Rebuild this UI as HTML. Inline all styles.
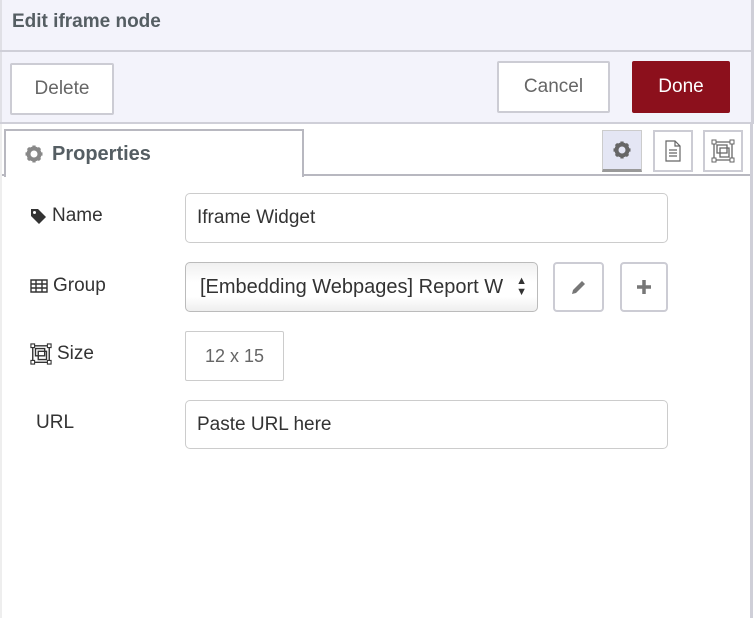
<!DOCTYPE html>
<html><head><style>
body{margin:0;width:754px;height:618px;background:#fff;font-family:"Liberation Sans",sans-serif;position:relative;overflow:hidden;color:#333}
.a{position:absolute;box-sizing:border-box}
.btn{border:2px solid #ccccd4;background:#fff;color:#666;font-size:19px;display:flex;align-items:center;justify-content:center;border-radius:2px}
.inp{border:1px solid #ccc;border-radius:5px;background:#fff;font-size:19px;color:#333;padding-left:11px;display:flex;align-items:center}
.lbl{font-size:19px;color:#333;display:flex;align-items:center;gap:5px}
</style></head><body>
<div class="a" style="left:0;top:0;width:754px;height:123px;background:#f3f3fb;border-left:2px solid #e0e0e6;border-right:3px solid #cfcfd8"></div>
<div class="a" style="left:12px;top:11px;font-size:19px;font-weight:bold;color:#555e63">Edit iframe node</div>
<div class="a" style="left:0;top:50px;width:754px;height:2px;background:#cfcfd8"></div>
<div class="a" style="left:0;top:122px;width:754px;height:2px;background:#cfcfd8"></div>
<div class="a btn" style="left:10px;top:63px;width:104px;height:52px">Delete</div>
<div class="a btn" style="left:497px;top:61px;width:113px;height:52px">Cancel</div>
<div class="a btn" style="left:632px;top:61px;width:98px;height:52px;background:#8c101c;border-color:#8c101c;color:#fff">Done</div>
<div class="a" style="left:750px;top:124px;width:3px;height:494px;background:#cfcfd8"></div>
<div class="a" style="left:0;top:124px;width:2px;height:494px;background:#eee"></div>
<div class="a" style="left:2px;top:174px;width:748px;height:2px;background:#b8b8c0"></div>
<svg width="0" height="0" style="position:absolute"><defs><g id="gear"><circle cx="9" cy="9" r="5.5" fill="none" stroke-width="4"/><g stroke-width="3.2" stroke-linecap="butt"><path d="M9 0.5v3.5M9 14v3.5M0.5 9h3.5M14 9h3.5M3 3l2.5 2.5M12.5 12.5L15 15M3 15l2.5-2.5M12.5 5.5L15 3"/></g></g></defs></svg>
<div class="a" style="left:4px;top:129px;width:300px;height:48px;background:#fff;border:2px solid #b8b8c0;border-bottom:none;display:flex;align-items:center;padding-left:19px;font-size:20px;font-weight:bold;color:#555e63;gap:9px">
<svg width="18" height="18" viewBox="0 0 18 18" stroke="#888"><use href="#gear"/></svg>Properties</div>
<div class="a" style="left:602px;top:130px;width:40px;height:42px;background:#e4e6f4;border:1px solid #ccc;border-bottom:3px solid #999;display:flex;align-items:center;justify-content:center">
<svg width="18" height="18" viewBox="0 0 18 18" stroke="#666"><use href="#gear"/></svg></div>
<div class="a" style="left:653px;top:130px;width:40px;height:42px;background:#fff;border:2px solid #ccccd4;display:flex;align-items:center;justify-content:center">
<svg width="16" height="22" viewBox="0 0 16 22"><path d="M1 1h9l5 5v15H1z M10 1v5h5 M4 10h8M4 13h8M4 16h8" fill="none" stroke="#666" stroke-width="1.2"/></svg></div>
<div class="a" style="left:703px;top:130px;width:40px;height:42px;background:#fff;border:2px solid #ccccd4;display:flex;align-items:center;justify-content:center">
<svg width="24" height="24" viewBox="0 0 24 24"><path d="M3 3h18v18H3z M6 6h10v8H6z M9 9h9v9H9z" fill="none" stroke="#666" stroke-width="1.3"/><path d="M1 1h4v4H1zM19 1h4v4h-4zM1 19h4v4H1zM19 19h4v4h-4z" fill="#fff" stroke="#666" stroke-width="1"/></svg></div>

<div class="a lbl" style="left:30px;top:204px;height:24px"><svg width="17" height="17" viewBox="0 0 17 17"><path d="M1 1h7l8 8-7 7-8-8z" fill="#333"/><circle cx="4.5" cy="4.5" r="1.5" fill="#fff"/></svg>Name</div>
<div class="a inp" style="left:185px;top:193px;width:483px;height:50px">Iframe Widget</div>

<div class="a lbl" style="left:30px;top:274px;height:24px"><svg width="18" height="14" viewBox="0 0 18 14"><path d="M1 1h16v12H1z M1 5h16M1 9h16M6 1v12M12 1v12" fill="none" stroke="#333" stroke-width="1.4"/></svg>Group</div>
<div class="a inp" style="left:185px;top:262px;width:353px;height:50px;background:linear-gradient(#f0f0f0,#fff 40%,#fff 70%,#eee);border-color:#bbb;white-space:nowrap;overflow:hidden;padding-left:14px;font-size:20px"><span style="display:inline-block;width:304px;overflow:hidden">[Embedding Webpages] Report Widget</span><span style="position:absolute;right:10px;top:13px;font-size:11px;line-height:11px;text-align:center;color:#333">▲<br>▼</span></div>
<div class="a btn" style="left:553px;top:262px;width:51px;height:50px;border-radius:4px">
<svg width="16" height="16" viewBox="0 0 16 16"><path d="M1 15l1-4 9-9 3 3-9 9z" fill="#777"/></svg></div>
<div class="a btn" style="left:620px;top:262px;width:48px;height:50px;border-radius:4px">
<svg width="14" height="14" viewBox="0 0 14 14"><path d="M7 0v14M0 7h14" stroke="#777" stroke-width="3.5"/></svg></div>

<div class="a lbl" style="left:30px;top:342px;height:24px"><svg width="22" height="22" viewBox="0 0 24 24"><path d="M3 3h18v18H3z M6 6h10v8H6z M9 9h9v9H9z" fill="none" stroke="#333" stroke-width="1.5"/><path d="M1 1h4v4H1zM19 1h4v4h-4zM1 19h4v4H1zM19 19h4v4h-4z" fill="#fff" stroke="#333" stroke-width="1.2"/></svg>Size</div>
<div class="a btn" style="left:185px;top:331px;width:99px;height:50px;border-radius:2px;font-size:18px;border-width:1px;border-color:#ccc">12 x 15</div>

<div class="a lbl" style="left:36px;top:411px;height:24px">URL</div>
<div class="a inp" style="left:185px;top:400px;width:483px;height:49px">Paste URL here</div>
</body></html>
